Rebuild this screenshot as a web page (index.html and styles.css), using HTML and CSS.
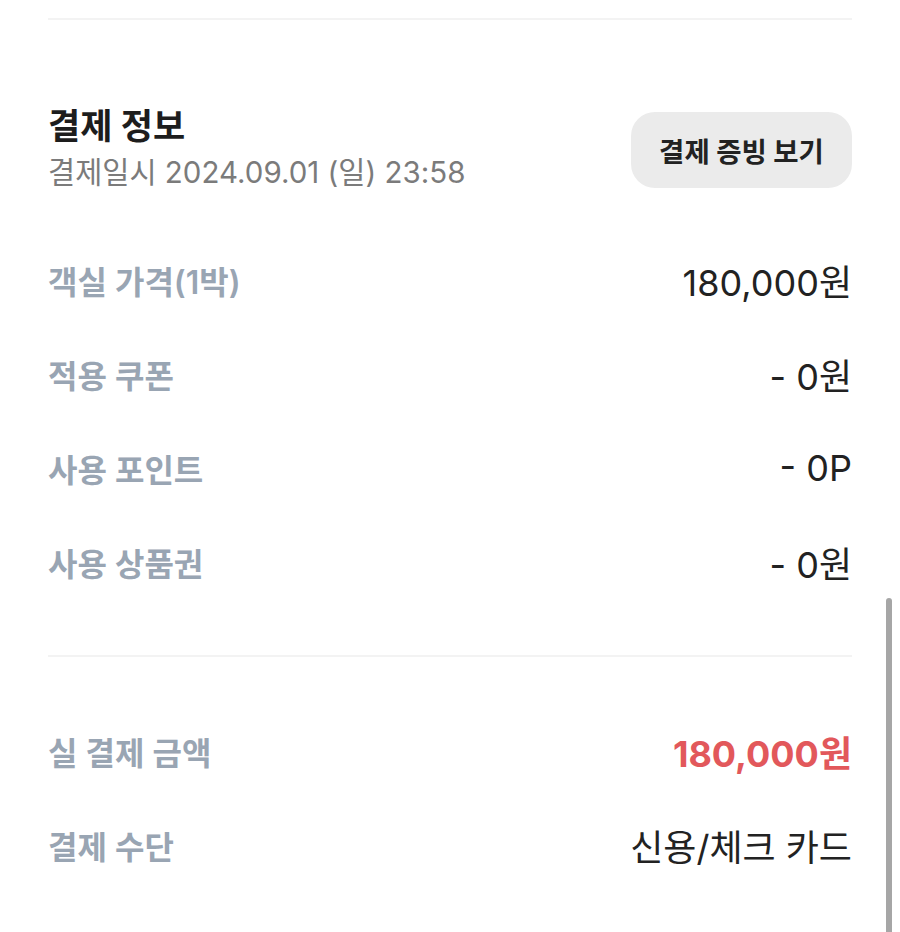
FILE: index.html
```html
<!DOCTYPE html>
<html lang="ko">
<head>
    <meta charset="UTF-8">
    <meta name="viewport" content="width=device-width, initial-scale=1.0">
    <title>결제 정보</title>
    <link rel="stylesheet" href="styles.css">
</head>
<body>
    <div class="page">
        <hr class="divider top">

        <div class="pay-header">
            <div class="pay-title">
                <h2>결제 정보</h2>
                <div class="pay-date">결제일시 2024.09.01 (일) 23:58</div>
            </div>
            <button class="receipt-btn" type="button">결제 증빙 보기</button>
        </div>

        <ul class="pay-rows">
            <li class="row"><span class="label">객실 가격(1박)</span><span class="value">180,000원</span></li>
            <li class="row"><span class="label">적용 쿠폰</span><span class="value">- 0원</span></li>
            <li class="row"><span class="label">사용 포인트</span><span class="value">- 0P</span></li>
            <li class="row"><span class="label">사용 상품권</span><span class="value">- 0원</span></li>
        </ul>

        <hr class="divider">

        <ul class="pay-rows total">
            <li class="row"><span class="label">실 결제 금액</span><span class="value price">180,000원</span></li>
            <li class="row"><span class="label">결제 수단</span><span class="value">신용/체크 카드</span></li>
        </ul>
    </div>

    <!-- overlay scrollbar -->
    <div class="scroll-thumb"></div>
</body>
</html>
```

FILE: styles.css
```css
body {
    font-family: Inter, 'Noto Sans CJK KR', sans-serif;
    margin: 0;
    background: #fff;
    color: #222;
}
.page {
    padding: 0 48px;
}
.divider {
    border: 0;
    height: 2px;
    background: #f3f3f3;
    margin: 0;
}
.divider.top {
    margin-top: 18px;
}
.pay-header {
    display: flex;
    align-items: center;
    justify-content: space-between;
    margin-top: 84px;
}
.pay-title h2 {
    font-size: 35px;
    line-height: 44px;
    font-weight: 700;
    color: #1d1d1d;
    margin: 0;
}
.pay-date {
    margin-top: 4px;
    font-size: 29.5px;
    line-height: 40px;
    color: #7b7b7b;
}
.receipt-btn {
    font-family: inherit;
    height: 76px;
    width: 221px;
    border: 0;
    border-radius: 24px;
    background: #ebebeb;
    color: #222;
    font-size: 27.5px;
    font-weight: 700;
    margin-top: 4px;
}
.pay-rows {
    list-style: none;
    margin: 41px 0 46px;
    padding: 0;
}
.pay-rows.total {
    margin-top: 47px;
}
.row {
    display: flex;
    align-items: center;
    justify-content: space-between;
    height: 94px;
}
.label {
    font-size: 32px;
    font-weight: 600;
    color: #99a5b3;
}
.value {
    font-size: 36px;
    color: #222;
}
.value.price {
    color: #e2585b;
    font-weight: 700;
}
.scroll-thumb {
    position: fixed;
    right: 8px;
    top: 598px;
    width: 6px;
    height: 360px;
    border-radius: 3px;
    background: #a6a6a6;
}
```
